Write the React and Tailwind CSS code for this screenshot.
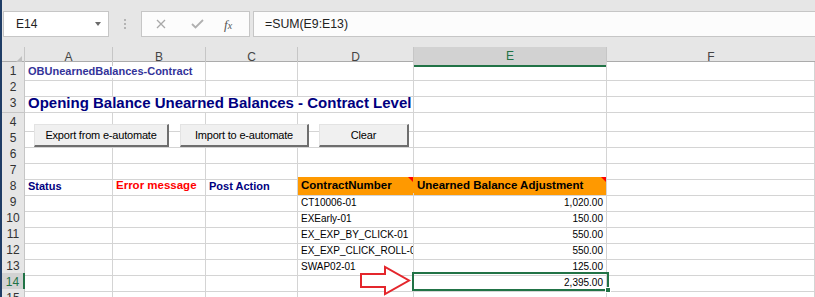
import React from 'react'

const COLS = 'grid grid-cols-[23px_88px_93px_92px_116px_193px_208px]'

const cell = 'relative flex items-center px-[3px] whitespace-nowrap overflow-hidden border-r border-b border-[#d4d4d4]'
const data = "text-[10px] font-['Liberation_Sans',Arial,sans-serif] text-black"

// rows of the sheet: [height, cells] — cells: { span, text, cls }
const rows = [
  { n: 1, h: 'h-[16px]', cells: [
    { span: 'col-span-2', text: 'OBUnearnedBalances-Contract', cls: 'text-[11px] font-bold text-[#333399]' },
    {}, {}, {}, {},
  ] },
  { n: 2, h: 'h-[16px]', cells: [{}, {}, {}, {}, {}, {}] },
  { n: 3, h: 'h-[19px]', cells: [
    { span: 'col-span-4', text: 'Opening Balance Unearned Balances - Contract Level', cls: 'text-[15px] font-bold text-[#000080]' },
    {}, {},
  ] },
  { n: 4, h: 'h-[16px]', cells: [{}, {}, {}, {}, {}, {}] },
  { n: 5, h: 'h-[16px]', cells: [{}, {}, {}, {}, {}, {}] },
  { n: 6, h: 'h-[16px]', cells: [{}, {}, {}, {}, {}, {}] },
  { n: 7, h: 'h-[16px]', cells: [{}, {}, {}, {}, {}, {}] },
  { n: 8, h: 'h-[16px]', cells: [
    { text: 'Status', cls: 'text-[11px] font-bold text-[#000080]' },
    { text: 'Error message', cls: 'text-[11.5px] font-bold text-[#ff0000]' },
    { text: 'Post Action', cls: 'text-[11px] font-bold text-[#000080]' },
    { text: 'ContractNumber', cls: 'text-[11.5px] font-bold text-black bg-[#ff9900] border-r-[#ff9900]', note: true },
    { text: 'Unearned Balance Adjustment', cls: 'text-[11.5px] font-bold text-black bg-[#ff9900]', note: true },
    {},
  ] },
  { n: 9, h: 'h-[16px]', cells: [{}, {}, {}, { text: 'CT10006-01', cls: data }, { text: '1,020.00', cls: data + ' justify-end' }, {}] },
  { n: 10, h: 'h-[16px]', cells: [{}, {}, {}, { text: 'EXEarly-01', cls: data }, { text: '150.00', cls: data + ' justify-end' }, {}] },
  { n: 11, h: 'h-[16px]', cells: [{}, {}, {}, { text: 'EX_EXP_BY_CLICK-01', cls: data }, { text: '550.00', cls: data + ' justify-end' }, {}] },
  { n: 12, h: 'h-[16px]', cells: [{}, {}, {}, { text: 'EX_EXP_CLICK_ROLL-01', cls: data }, { text: '550.00', cls: data + ' justify-end' }, {}] },
  { n: 13, h: 'h-[16px]', cells: [{}, {}, {}, { text: 'SWAP02-01', cls: data }, { text: '125.00', cls: data + ' justify-end' }, {}] },
  { n: 14, h: 'h-[16px]', sel: true, cells: [{}, {}, {}, {}, { text: '2,395.00', cls: data + ' justify-end' }, {}] },
  { n: 15, h: 'h-[16px]', cells: [{}, {}, {}, {}, {}, {}] },
]

function XlButton({ className, children }) {
  return (
    <div className={`absolute h-[23px] flex items-center justify-center bg-[#f0f0f0] border-t border-l border-t-[#e3e3e3] border-l-[#e3e3e3] border-r-2 border-b-2 border-r-[#6e6e6e] border-b-[#6e6e6e] text-[11px] text-black tracking-[-0.2px] ${className}`}>
      {children}
    </div>
  )
}

export default function App() {
  return (
    <div className="w-[815px] h-[297px] overflow-hidden bg-white border-l-2 border-[#1f3d66] font-['Liberation_Sans',Arial,sans-serif]">
      {/* formula bar */}
      <div className="h-[47px] bg-[#e6e6e6] pt-[11px]">
        <div className="flex h-[26px] items-stretch">
          <div className="ml-[1px] w-[106px] bg-white border border-[#c6c6c6] flex items-center justify-between pl-[12px] pr-[7px]">
            <span className="text-[12px] text-[#222]">E14</span>
            <span className="w-0 h-0 border-l-[3.5px] border-r-[3.5px] border-t-[4px] border-l-transparent border-r-transparent border-t-[#6a6a6a]" />
          </div>
          <div className="w-[32px] flex flex-col items-center justify-center gap-[2px]">
            <span className="w-[2px] h-[2px] bg-[#b4b4b4]" />
            <span className="w-[2px] h-[2px] bg-[#b4b4b4]" />
            <span className="w-[2px] h-[2px] bg-[#b4b4b4]" />
          </div>
          <div className="w-[109px] bg-[#fcfcfc] border border-[#c6c6c6] flex items-center">
            <svg width="10" height="10" viewBox="0 0 10 10" className="ml-[14px]">
              <path d="M1 1 L9 9 M9 1 L1 9" stroke="#a8a8a8" strokeWidth="1.3" fill="none" />
            </svg>
            <svg width="13" height="10" viewBox="0 0 13 10" className="ml-[25px]">
              <path d="M1 5 L4.5 8.5 L12 1" stroke="#b0b0b0" strokeWidth="1.8" fill="none" />
            </svg>
            <span className="ml-[20px] text-[13px] italic font-['Liberation_Serif',serif] text-[#555] leading-none">
              f<span className="text-[10px]">x</span>
            </span>
          </div>
          <div className="ml-[3px] flex-1 bg-[#fcfcfc] border border-[#c6c6c6] border-r-0 flex items-center pl-[11px]">
            <span className="text-[12.3px] text-[#222]">=SUM(E9:E13)</span>
          </div>
        </div>
      </div>

      {/* column headers */}
      <div className={`${COLS} h-[15px] bg-[#e6e6e6] border-b border-[#ababab] text-[12px] text-[#444]`}>
        <div className="relative border-r border-[#c6c6c6]">
          <svg width="8" height="8" viewBox="0 0 8 8" className="absolute right-[2px] bottom-[2px]">
            <path d="M8 0 L8 8 L0 8 Z" fill="#c0c0c0" />
          </svg>
        </div>
        {['A', 'B', 'C', 'D'].map(c => (
          <div key={c} className="flex items-center justify-center border-r border-[#c6c6c6]">{c}</div>
        ))}
        <div className="flex items-center justify-center bg-[#d2d2d2] border-r border-[#c6c6c6] border-b-2 border-b-[#217346] text-[#217346] -mb-px">E</div>
        <div className="flex items-center justify-center">F</div>
      </div>

      {/* sheet */}
      <div className="relative">
        {rows.map(r => (
          <div key={r.n} className={`${COLS} ${r.h}`}>
            <div className={`flex items-center justify-center text-[12px] border-b border-r ${r.sel ? 'bg-[#d2d2d2] text-[#217346] border-r-2 border-r-[#217346] border-b-[#c6c6c6]' : 'bg-[#e6e6e6] text-[#333] border-[#c6c6c6]'}`}>
              {r.n}
            </div>
            {r.cells.map((c, i) => (
              <div key={i} className={`${cell} ${c.span || ''} ${c.cls || ''}`}>
                {c.text}
                {c.note && (
                  <span className="absolute top-0 right-0 w-0 h-0 border-l-[5px] border-l-transparent border-t-[5px] border-t-[#ff0000]" />
                )}
              </div>
            ))}
          </div>
        ))}

        {/* form buttons */}
        <XlButton className="left-[32px] top-[62px] w-[135px]">Export from e-automate</XlButton>
        <XlButton className="left-[178px] top-[62px] w-[129px]">Import to e-automate</XlButton>
        <XlButton className="left-[317px] top-[62px] w-[90px]">Clear</XlButton>

        {/* red arrow */}
        <svg width="56" height="32" viewBox="0 0 56 32" className="absolute left-[356px] top-[203px]">
          <path d="M3 9 L27 9 L27 2 L51 15.5 L27 29 L27 22 L3 22 Z" fill="#fff" stroke="#e4262c" strokeWidth="2" strokeLinejoin="miter" />
        </svg>

        {/* selection */}
        <div className="absolute left-[410px] top-[210px] w-[197px] h-[19px] border-2 border-[#217346]" />
        <div className="absolute left-[603px] top-[225px] w-[6px] h-[6px] bg-[#217346] border border-white" />
      </div>
    </div>
  )
}
